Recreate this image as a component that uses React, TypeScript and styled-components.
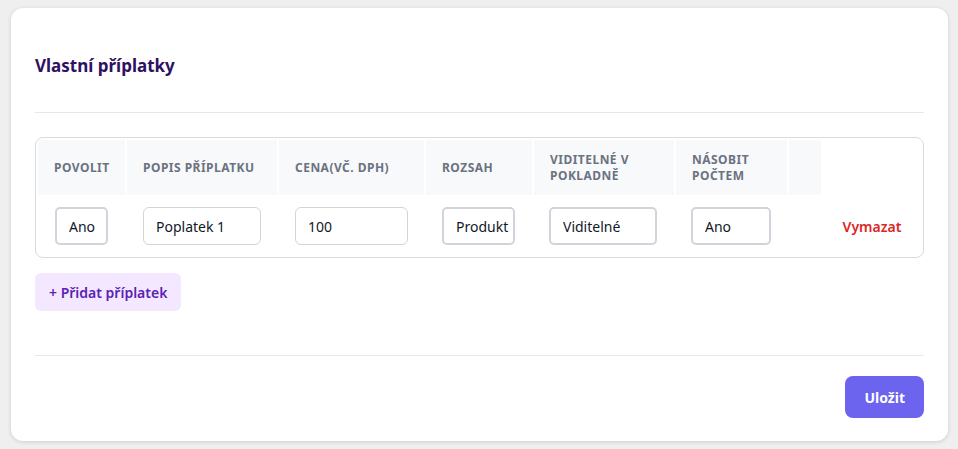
import React from "react";
import styled, { createGlobalStyle } from "styled-components";

const Global = createGlobalStyle`
  html, body { margin: 0; padding: 0; background: #efefef; }
  body {
    font-family: "Noto Sans", "Open Sans", Arial, sans-serif;
    color: #111827;
  }
  * { box-sizing: border-box; }
`;

const Page = styled.div`
  padding: 8px 10px 8px 11px;
`;

const Card = styled.section`
  background: #ffffff;
  border-radius: 12px;
  box-shadow: 0 1px 4px rgba(0, 0, 0, 0.14);
  padding: 0 24px 23px;
`;

const Header = styled.div`
  padding: 44px 0 32px;
  border-bottom: 1px solid #e5e7eb;
`;

const Title = styled.h2`
  margin: 0;
  font-size: 17px;
  line-height: 28px;
  font-weight: 700;
  color: #2e1065;
`;

const TableBox = styled.div`
  margin-top: 24px;
  border: 1px solid #d9dbe0;
  border-radius: 8px;
`;

const Table = styled.table`
  width: 100%;
  table-layout: fixed;
  border-collapse: separate;
  border-spacing: 2px;
`;

const Th = styled.th`
  background: #f8f9fb;
  height: 55px;
  padding: 0 16px;
  text-align: left;
  vertical-align: middle;
  font-size: 12px;
  line-height: 16px;
  font-weight: 700;
  letter-spacing: 0.04em;
  text-transform: uppercase;
  color: #6b7280;
`;

const Td = styled.td<{ $center?: boolean }>`
  height: 58px;
  padding: 0 16px;
  vertical-align: middle;
  text-align: ${(p) => (p.$center ? "center" : "left")};
`;

const TextInput = styled.input<{ $w: number }>`
  display: block;
  width: ${(p) => p.$w}px;
  height: 38px;
  padding: 0 12px;
  border: 1px solid #d1d5db;
  border-radius: 6px;
  background: #fff;
  font-family: inherit;
  font-size: 14px;
  color: #111827;
  outline: none;
`;

const Select = styled.select<{ $w: number; $shift?: number }>`
  display: block;
  width: ${(p) => p.$w}px;
  height: 38px;
  margin-left: ${(p) => p.$shift ?? 0}px;
  padding: 0 0 0 12px;
  border: 2px solid #d1d5db;
  border-radius: 5px;
  background: #fff;
  appearance: none;
  font-family: inherit;
  font-size: 14px;
  color: #111827;
  outline: none;
`;

const DeleteLink = styled.button`
  border: none;
  background: none;
  padding: 0;
  font-family: inherit;
  font-size: 14px;
  font-weight: 600;
  color: #dc2626;
  cursor: pointer;
`;

const AddButton = styled.button`
  margin-top: 15px;
  height: 38px;
  padding: 0 14px;
  border: none;
  border-radius: 6px;
  background: #f3e8ff;
  color: #5b21b6;
  font-family: inherit;
  font-size: 14px;
  font-weight: 600;
  cursor: pointer;
`;

const Footer = styled.div`
  margin-top: 44px;
  padding-top: 20px;
  border-top: 1px solid #e5e7eb;
  display: flex;
  justify-content: flex-end;
`;

const SaveButton = styled.button`
  height: 42px;
  padding: 0 19px;
  border: none;
  border-radius: 8px;
  background: #6c63ef;
  color: #fff;
  font-family: inherit;
  font-size: 14px;
  font-weight: 700;
  cursor: pointer;
`;

const widths = [87, 150, 145, 106, 140, 111, 32, 98];

export default function App() {
  return (
    <>
      <Global />
      <Page>
        <Card>
          <Header>
            <Title>Vlastní příplatky</Title>
          </Header>
          <TableBox>
            <Table>
              <colgroup>
                {widths.map((w, i) => (
                  <col key={i} style={{ width: w }} />
                ))}
              </colgroup>
              <thead>
                <tr>
                  <Th>Povolit</Th>
                  <Th>Popis příplatku</Th>
                  <Th>Cena(vč. DPH)</Th>
                  <Th>Rozsah</Th>
                  <Th>Viditelné v pokladně</Th>
                  <Th>Násobit počtem</Th>
                  <Th />
                </tr>
              </thead>
              <tbody>
                <tr>
                  <Td>
                    <Select $w={53} $shift={1} defaultValue="ano">
                      <option value="ano">Ano</option>
                      <option value="ne">Ne</option>
                    </Select>
                  </Td>
                  <Td>
                    <TextInput $w={118} defaultValue="Poplatek 1" />
                  </Td>
                  <Td>
                    <TextInput $w={113} defaultValue="100" />
                  </Td>
                  <Td>
                    <Select $w={73} defaultValue="produkt">
                      <option value="produkt">Produkt</option>
                      <option value="objednavka">Objednávka</option>
                    </Select>
                  </Td>
                  <Td>
                    <Select $w={108} $shift={-1} defaultValue="viditelne">
                      <option value="viditelne">Viditelné</option>
                      <option value="skryte">Skryté</option>
                    </Select>
                  </Td>
                  <Td>
                    <Select $w={80} $shift={-1} defaultValue="ano">
                      <option value="ano">Ano</option>
                      <option value="ne">Ne</option>
                    </Select>
                  </Td>
                  <Td />
                  <Td $center>
                    <DeleteLink>Vymazat</DeleteLink>
                  </Td>
                </tr>
              </tbody>
            </Table>
          </TableBox>
          <AddButton>+ Přidat příplatek</AddButton>
          <Footer>
            <SaveButton>Uložit</SaveButton>
          </Footer>
        </Card>
      </Page>
    </>
  );
}
